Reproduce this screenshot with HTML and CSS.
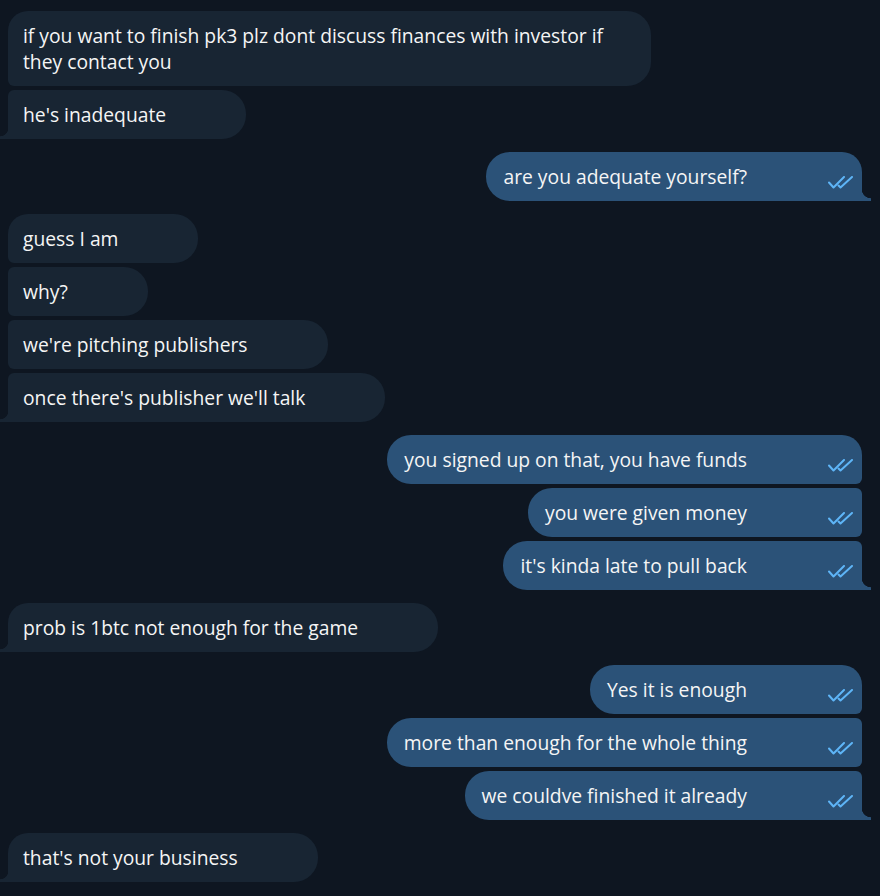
FILE: index.html
```html
<!DOCTYPE html>
<html lang="en">
<head>
<meta charset="utf-8">
<title>Chat</title>
<link rel="stylesheet" href="styles.css">
</head>
<body>
<div class="chat">
  <div class="group in">
    <div class="msg first wide">if you want to finish pk3 plz dont discuss finances with investor if<br>they contact you</div>
    <div class="msg last">he's inadequate</div>
  </div>
  <div class="group out">
    <div class="msg first last"><span class="txt">are you adequate yourself?</span><svg class="ticks" viewBox="0 0 26 13" width="26" height="13"><path d="M1 6.5 L5.5 11.5 L16 1"/><path d="M10.5 9.5 L12.5 11.5 L24 1"/></svg></div>
  </div>
  <div class="group in">
    <div class="msg first">guess I am</div>
    <div class="msg">why?</div>
    <div class="msg">we're pitching publishers</div>
    <div class="msg last">once there's publisher we'll talk</div>
  </div>
  <div class="group out">
    <div class="msg first"><span class="txt">you signed up on that, you have funds</span><svg class="ticks" viewBox="0 0 26 13" width="26" height="13"><path d="M1 6.5 L5.5 11.5 L16 1"/><path d="M10.5 9.5 L12.5 11.5 L24 1"/></svg></div>
    <div class="msg"><span class="txt">you were given money</span><svg class="ticks" viewBox="0 0 26 13" width="26" height="13"><path d="M1 6.5 L5.5 11.5 L16 1"/><path d="M10.5 9.5 L12.5 11.5 L24 1"/></svg></div>
    <div class="msg last"><span class="txt">it's kinda late to pull back</span><svg class="ticks" viewBox="0 0 26 13" width="26" height="13"><path d="M1 6.5 L5.5 11.5 L16 1"/><path d="M10.5 9.5 L12.5 11.5 L24 1"/></svg></div>
  </div>
  <div class="group in">
    <div class="msg first last">prob is 1btc not enough for the game</div>
  </div>
  <div class="group out">
    <div class="msg first"><span class="txt">Yes it is enough</span><svg class="ticks" viewBox="0 0 26 13" width="26" height="13"><path d="M1 6.5 L5.5 11.5 L16 1"/><path d="M10.5 9.5 L12.5 11.5 L24 1"/></svg></div>
    <div class="msg"><span class="txt">more than enough for the whole thing</span><svg class="ticks" viewBox="0 0 26 13" width="26" height="13"><path d="M1 6.5 L5.5 11.5 L16 1"/><path d="M10.5 9.5 L12.5 11.5 L24 1"/></svg></div>
    <div class="msg last"><span class="txt">we couldve finished it already</span><svg class="ticks" viewBox="0 0 26 13" width="26" height="13"><path d="M1 6.5 L5.5 11.5 L16 1"/><path d="M10.5 9.5 L12.5 11.5 L24 1"/></svg></div>
  </div>
  <div class="group in">
    <div class="msg first last">that's not your business</div>
  </div>
</div>
</body>
</html>
```
FILE: styles.css
```css
html, body {
  margin: 0;
  padding: 0;
  background: #0e1621;
}
body {
  width: 880px;
  height: 896px;
  overflow: hidden;
  font-family: "Open Sans", "Noto Sans", sans-serif;
  font-size: 19.3px;
  line-height: 26px;
  color: #f5f5f5;
}
.chat {
  display: flex;
  flex-direction: column;
  gap: 13px;
  padding: 11px 18px 0 8px;
}
.group {
  display: flex;
  flex-direction: column;
  gap: 4px;
}
.group.in { align-items: flex-start; }
.group.out { align-items: flex-end; }

.msg {
  position: relative;
  box-sizing: border-box;
  min-height: 49px;
}
.in .msg {
  background: #182533;
  padding: 12px 80px 11px 15px;
  border-radius: 6px 24px 24px 6px;
}
.in .msg.wide { padding-right: 48px; }
.in .msg.first { border-top-left-radius: 20px; }
.in .msg.last { border-bottom-left-radius: 0; }
.in .msg.last::before {
  content: "";
  position: absolute;
  left: -8px;
  bottom: 0;
  width: 8px;
  height: 11px;
  background: radial-gradient(circle at 0 0, transparent 8px, #182533 8.6px);
}

.out .msg {
  background: #2b5278;
  display: flex;
  align-items: flex-end;
  padding: 12px 8px 11px 17px;
  border-radius: 24px 6px 6px 24px;
}
.out .msg.first { border-top-right-radius: 20px; }
.out .msg.last { border-bottom-right-radius: 0; }
.out .msg.last::after {
  content: "";
  position: absolute;
  right: -9px;
  bottom: 0;
  width: 9px;
  height: 12px;
  background: radial-gradient(circle at 100% 0, transparent 9px, #2b5278 9.6px);
}
.txt { white-space: nowrap; }
.ticks {
  flex: none;
  margin-left: 81px;
  margin-bottom: 1px;
  fill: none;
  stroke: #5eb5f7;
  stroke-width: 2;
  stroke-linecap: round;
  stroke-linejoin: round;
}
```
